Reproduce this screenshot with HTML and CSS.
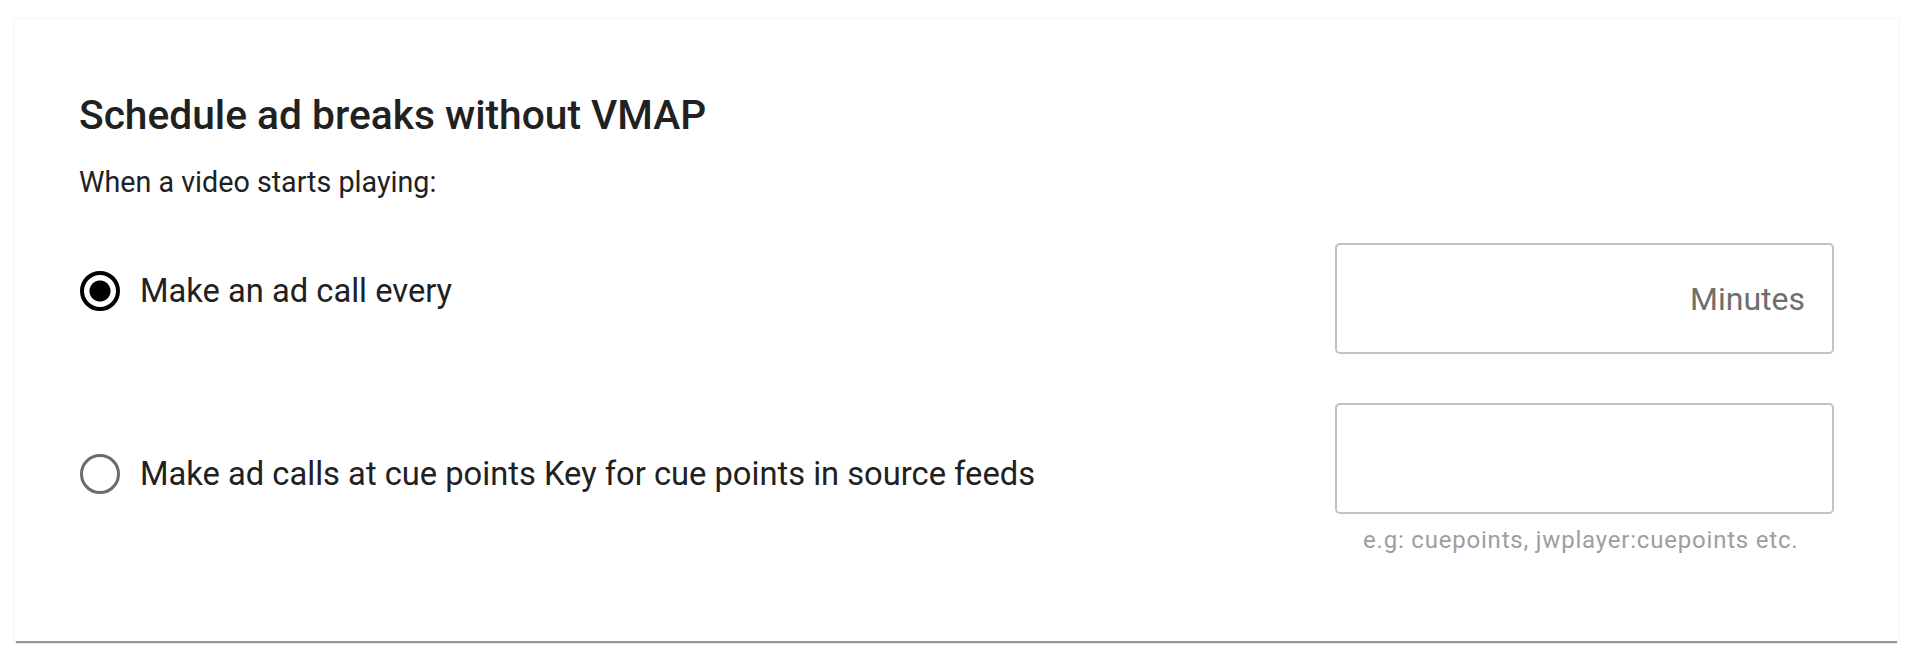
FILE: index.html
```html
<!DOCTYPE html>
<html lang="en">
<head>
  <meta charset="UTF-8" />
  <meta name="viewport" content="width=device-width, initial-scale=1.0"/>
  <title>Ad schedule</title>
  <link rel="stylesheet" href="styles.css">
</head>
<body>
  <div class="page">
    <div class="card">
      <h2 class="card-title">Schedule ad breaks without VMAP</h2>
      <p class="intro">When a video starts playing:</p>

      <div class="option option-interval">
        <label class="choice">
          <input type="radio" name="schedule" value="interval" checked />
          <span>Make an ad call every</span>
        </label>
        <div class="field">
          <input type="text" class="text-input" placeholder="Minutes" />
        </div>
      </div>

      <div class="option option-cue">
        <label class="choice">
          <input type="radio" name="schedule" value="cue" />
          <span>Make ad calls at cue points Key for cue points in source feeds</span>
        </label>
        <div class="field">
          <input type="text" class="text-input" />
          <div class="hint">e.g: cuepoints, jwplayer:cuepoints etc.</div>
        </div>
      </div>
    </div>
  </div>
</body>
</html>
```

FILE: styles.css
```css
body {
  margin: 0;
  font-family: Roboto, "Liberation Sans", Arial, sans-serif;
  color: #212121;
  background: #fff;
}

.page {
  padding: 19px 24px 23px 15px;
}

.card {
  background: #fff;
  padding: 72px 64px 87px 64px;
  box-shadow: 0 3px 1px -1px rgba(0,0,0,0.4), 0 0 5px rgba(0,0,0,0.08);
}

.card-title {
  margin: 0;
  font-size: 40.7px;
  line-height: 48px;
  font-weight: 500;
}

.intro {
  margin: 27px 0 0 0;
  font-size: 28.7px;
  line-height: 32px;
}

.option {
  display: flex;
  justify-content: space-between;
  align-items: flex-start;
}

.option-interval {
  margin-top: 45px;
}

.option-interval .choice {
  margin-top: 28px;
}

.option-cue {
  margin-top: 49px;
}

.option-cue .choice {
  margin-top: 51px;
}

.choice {
  display: flex;
  align-items: center;
  gap: 20px;
  font-size: 32.7px;
  line-height: 40px;
  cursor: pointer;
}

.choice input {
  appearance: none;
  -webkit-appearance: none;
  box-sizing: border-box;
  flex-shrink: 0;
  width: 40px;
  height: 40px;
  margin: 0 0 0 1px;
  border: 3px solid #6b6b6b;
  border-radius: 50%;
  background: #fff;
  cursor: pointer;
}

.choice input:checked {
  border: 4px solid #000;
  background: radial-gradient(circle, #000 0 10px, #fff 11px);
}

.field {
  width: 499px;
}

.text-input {
  display: block;
  box-sizing: border-box;
  width: 100%;
  height: 111px;
  padding: 0 27px 0 22px;
  border: 2px solid #c2c2c2;
  border-radius: 5px;
  font-family: inherit;
  font-size: 32px;
  text-align: right;
  color: #212121;
  outline: none;
}

.text-input::placeholder {
  color: #6e6e6e;
}

.hint {
  margin-top: 12px;
  padding-left: 28px;
  font-size: 24px;
  line-height: 28px;
  letter-spacing: 0.8px;
  color: #9e9e9e;
}
```
